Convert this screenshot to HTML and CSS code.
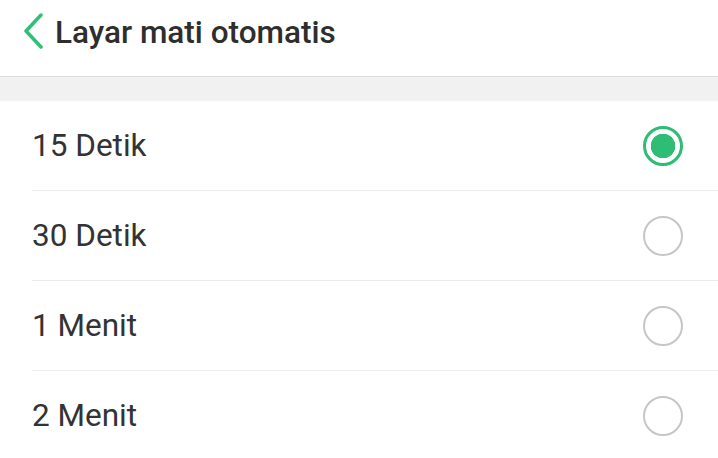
FILE: index.html
```html
<!DOCTYPE html>
<html lang="id">
  <head>
    <meta charset="UTF-8" />
    <meta name="viewport" content="width=device-width, initial-scale=1.0" />
    <title>Layar mati otomatis</title>
    <link rel="stylesheet" href="styles.css">
  </head>
  <body>
    <div class="header">
      <svg class="back" width="22" height="36" viewBox="0 0 22 36">
        <path d="M19 2 L4 18 L19 34" fill="none" stroke="#2fbf78" stroke-width="3.5" stroke-linecap="round" stroke-linejoin="round" />
      </svg>
      <h1 class="title">Layar mati otomatis</h1>
    </div>
    <div class="band"></div>
    <ul class="options">
      <li class="option">
        <span class="label">15 Detik</span>
        <span class="radio checked"></span>
      </li>
      <li class="option">
        <span class="label">30 Detik</span>
        <span class="radio"></span>
      </li>
      <li class="option">
        <span class="label">1 Menit</span>
        <span class="radio"></span>
      </li>
      <li class="option">
        <span class="label">2 Menit</span>
        <span class="radio"></span>
      </li>
    </ul>
  </body>
</html>
```

FILE: styles.css
```css
body {
  margin: 0;
  font-family: Roboto, "Noto Sans", sans-serif;
  background-color: #fff;
  color: #333;
  overflow: hidden;
}

.header {
  display: flex;
  align-items: center;
  height: 77px;
  padding-left: 22px;
  border-bottom: 1px solid #dcdcdc;
  box-sizing: border-box;
}

.back {
  flex-shrink: 0;
  margin-top: -14px;
}

.title {
  margin: -12px 0 0 11px;
  font-size: 31.5px;
  font-weight: 500;
  color: #2e2e2e;
}

.band {
  height: 24px;
  background-color: #f1f1f1;
}

.options {
  list-style: none;
  margin: 0;
  padding: 0 0 0 32px;
}

.option {
  display: flex;
  align-items: center;
  justify-content: space-between;
  height: 89px;
  padding-right: 35px;
  border-bottom: 1px solid #ececec;
}

.label {
  font-size: 31.5px;
  color: #333;
}

.radio {
  width: 40px;
  height: 40px;
  border-radius: 50%;
  border: 2.5px solid #c6c6c6;
  box-sizing: border-box;
}

.radio.checked {
  border: 3.5px solid #2dbd74;
  background: radial-gradient(circle, #2dbd74 0, #2dbd74 12px, #fff 12.5px);
}
```
